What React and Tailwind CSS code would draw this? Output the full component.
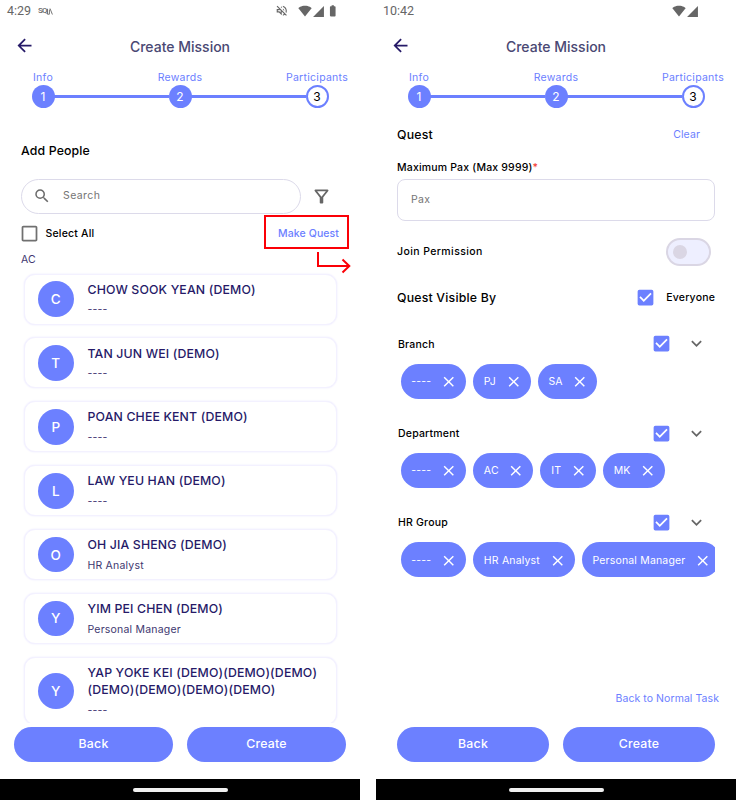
import React from "react";
import {
  MdArrowBack,
  MdBatteryFull,
  MdCheckBox,
  MdCheckBoxOutlineBlank,
  MdClose,
  MdKeyboardArrowDown,
  MdOutlineFilterAlt,
  MdOutlineVolumeOff,
  MdSearch,
  MdSignalCellular4Bar,
  MdSignalWifi4Bar,
} from "react-icons/md";

const people = [
  { initial: "C", name: "CHOW SOOK YEAN (DEMO)", role: "----" },
  { initial: "T", name: "TAN JUN WEI (DEMO)", role: "----" },
  { initial: "P", name: "POAN CHEE KENT (DEMO)", role: "----" },
  { initial: "L", name: "LAW YEU HAN (DEMO)", role: "----" },
  { initial: "O", name: "OH JIA SHENG (DEMO)", role: "HR Analyst" },
  { initial: "Y", name: "YIM PEI CHEN (DEMO)", role: "Personal Manager" },
  { initial: "Y", name: "YAP YOKE KEI (DEMO)(DEMO)(DEMO)\n(DEMO)(DEMO)(DEMO)(DEMO)", role: "----" },
];

const groups = [
  { title: "Branch", chips: ["----", "PJ", "SA"] },
  { title: "Department", chips: ["----", "AC", "IT", "MK"] },
  { title: "HR Group", chips: ["----", "HR Analyst", "Personal Manager"] },
];

function StatusBar({ time, full }) {
  return (
    <div className="flex h-[22px] shrink-0 items-center pl-[7px] text-[#666]">
      <span className="font-[Roboto] text-[12.5px] leading-[22px]">{time}</span>
      {full && (
        <span className="ml-[7px] flex h-[22px] items-center">
          <span className="font-[Roboto] text-[8px] font-medium leading-[22px] tracking-[-1px]">SQ</span>
          <svg className="ml-px" width="6" height="7" viewBox="0 0 6 7" fill="none" stroke="currentColor" strokeWidth="0.9">
            <path d="M0.5 0.8V6.2H2.4V1.5M3 0.5L5.4 6.5" />
          </svg>
        </span>
      )}
      <div className={full ? "ml-auto mr-[21px] flex items-center" : "ml-auto mr-[36px] flex items-center"}>
        {full && <MdOutlineVolumeOff className="mr-[9px] size-[13.5px]" />}
        <MdSignalWifi4Bar className="size-[14px]" />
        <MdSignalCellular4Bar className="mr-px size-[13px]" />
        {full && <MdBatteryFull className="size-[13.5px]" />}
      </div>
    </div>
  );
}

function Step({ label, number, current }) {
  return (
    <div className="flex w-[70px] flex-col items-center">
      <span className="h-[15px] text-[10.5px] leading-[16px] tracking-[0.28px] text-[#6c80ff]">{label}</span>
      <span
        className={
          current
            ? "flex size-[23px] items-center justify-center rounded-full border-2 border-[#6c80ff] bg-white pt-px text-[12px] text-black"
            : "flex size-[23px] items-center justify-center rounded-full bg-[#6c80ff] pt-px text-[12px] text-white"
        }
      >
        {number}
      </span>
    </div>
  );
}

function Header() {
  return (
    <>
      <div className="grid h-12 shrink-0 grid-cols-[60px_1fr_60px] items-center">
        <MdArrowBack className="mb-[2px] ml-[14px] size-[21px] text-[#261a68]" />
        <h1 className="pt-px text-center text-[14px] font-medium leading-5 text-[#4a4873]">Create Mission</h1>
      </div>
      <div className="-mt-[0.5px] flex h-[40.5px] shrink-0 pl-2">
        <Step label="Info" number="1" />
        <Line />
        <Step label="Rewards" number="2" />
        <Line />
        <Step label="Participants" number="3" current />
      </div>
    </>
  );
}

function Line() {
  return <div className="-mx-6 mt-[25px] h-[3px] w-[115px] shrink-0 bg-[#6c80ff]" />;
}

function Footer() {
  return (
    <div className="mt-auto flex h-[21px] shrink-0 items-center justify-center bg-black">
      <div className="h-[4px] w-[95px] rounded-full bg-[#f0f0f0]" />
    </div>
  );
}

function Button({ children }) {
  return (
    <button className="h-[35px] flex-1 rounded-full bg-[#6c80ff] text-[12.3px] font-medium tracking-[0.25px] text-white">
      {children}
    </button>
  );
}

function PersonCard({ initial, name, role }) {
  return (
    <div className="flex min-h-[51px] shrink-0 items-center rounded-[11px] border-[1.5px] border-[#f3f1ff] bg-white pb-[4.5px] pl-[13.5px] pt-[5.7px] shadow-[0_0_2px_#e9e6ff]">
      <div className="mb-px flex size-[35.5px] shrink-0 items-center justify-center rounded-full bg-[#6c80ff] text-[13.5px] font-medium text-white">
        {initial}
      </div>
      <div className="ml-[14px] text-[#261a68]">
        <div className="whitespace-pre-line text-[12.3px] font-medium leading-[17.8px] tracking-[0.15px]">{name}</div>
        <div className="mt-[4px] text-[10.5px] leading-[16px] tracking-[0.2px] text-[#40376f]">{role}</div>
      </div>
    </div>
  );
}

function ParticipantsScreen() {
  return (
    <section className="relative flex h-[800px] w-[360px] flex-col bg-white">
      <StatusBar time="4:29" full />
      <Header />
      <h2 className="mb-[18.5px] ml-[21px] mt-[30.5px] text-[12.3px] font-medium leading-5 tracking-[0.15px]">Add People</h2>
      <div className="flex shrink-0 items-center pl-[21px]">
        <div className="flex h-[34.5px] w-[279.5px] items-center rounded-full border border-[#dcdaea] pl-[11px]">
          <MdSearch className="size-[18px] text-[#6b6b6b]" />
          <span className="ml-3 text-[10.5px] tracking-[0.4px] text-[#757575]">Search</span>
        </div>
        <MdOutlineFilterAlt className="ml-[10px] size-[21px] text-[#666]" />
      </div>
      <div className="flex h-[39px] shrink-0 items-center pl-[19px] pr-[21px]">
        <MdCheckBoxOutlineBlank className="size-[21px] text-[#707070]" />
        <span className="ml-[5.5px] pt-px text-[10.5px] font-medium tracking-[0.2px]">Select All</span>
        <span className="ml-auto pt-px text-[10.5px] font-medium tracking-[0.1px] text-[#6c80ff]">Make Quest</span>
      </div>
      <div className="ml-[21px] h-[15px] shrink-0 text-[10.5px] leading-[14px] text-[#40376f]">AC</div>
      <div className="mx-[21px] flex h-[455px] shrink-0 flex-col gap-[12.9px] overflow-hidden px-[2.5px] pt-[6px]">
        {people.map((p) => (
          <PersonCard key={p.name} {...p} />
        ))}
      </div>
      <div className="mx-[14px] mt-[4px] flex gap-[14px]">
        <Button>Back</Button>
        <Button>Create</Button>
      </div>
      <Footer />
      <div className="absolute left-[264px] top-[215px] h-[34px] w-[85px] border-2 border-[#fb0007]" />
      <svg className="absolute left-[316px] top-[251px]" width="36" height="24" fill="none" stroke="#fb0007" strokeWidth="2">
        <path d="M2 1V15H33" />
        <path d="M26.500 8.500L33.300 15L26.500 21.500" />
      </svg>
    </section>
  );
}

function Chip({ label }) {
  return (
    <span className="flex h-[35px] shrink-0 items-center rounded-full bg-[#6c80ff] pl-[10.8px] pr-[8.5px] pt-px text-[10.5px] tracking-[0.18px] text-white">
      {label}
      <MdClose className="ml-[8.7px] size-[17.5px]" />
    </span>
  );
}

function QuestScreen() {
  return (
    <section className="flex h-[800px] w-[360px] flex-col bg-white">
      <StatusBar time="10:42" />
      <Header />
      <div className="ml-[21px] mr-[36px] mt-[14px] flex h-5 shrink-0 items-center justify-between pt-px">
        <h2 className="pt-px text-[12.3px] font-medium tracking-[0.2px]">Quest</h2>
        <span className="text-[10.5px] tracking-[0.1px] text-[#6c80ff]">Clear</span>
      </div>
      <label className="ml-[21px] mt-[16px] h-[15px] text-[10.5px] font-medium leading-[16px] tracking-[0.18px]">
        Maximum Pax (Max 9999)<span className="text-[#f44336]">*</span>
      </label>
      <div className="mx-[21px] mt-[4px] flex h-[41.5px] shrink-0 items-center rounded-[8px] border border-[#dcdaea] pl-[13px] text-[10.5px] tracking-[0.3px] text-[#757575]">
        Pax
      </div>
      <div className="ml-[21px] mr-[25px] mt-[17px] flex h-[28px] shrink-0 items-center justify-between">
        <span className="text-[10.5px] font-medium tracking-[0.4px]">Join Permission</span>
        <div className="flex h-[28px] w-[45px] items-center rounded-full border-2 border-[#dad6e4] bg-[#eeefff] pl-[5px]">
          <div className="size-[14px] rounded-full bg-[#dad6e4]" />
        </div>
      </div>
      <div className="mx-[21px] mt-[21px] flex h-[22px] shrink-0 items-center">
        <h2 className="pt-px text-[12.3px] font-medium tracking-[0.2px]">Quest Visible By</h2>
        <MdCheckBox className="ml-auto size-[21px] text-[#6c80ff]" />
        <span className="ml-[10.5px] text-[10.5px] font-medium tracking-[0.18px]">Everyone</span>
      </div>
      <div className="mt-[24.4px] flex flex-col gap-[23.3px]">
        {groups.map((g) => (
          <div key={g.title} className="ml-[22px] mr-[21px] flex flex-col overflow-hidden">
            <div className="flex h-[22px] items-center pr-[8px]">
              <span className="pt-px text-[10.5px] font-medium tracking-[0.2px]">{g.title}</span>
              <MdCheckBox className="ml-auto size-[21px] text-[#6c80ff]" />
              <MdKeyboardArrowDown className="ml-[14px] size-[21px] text-[#666]" />
            </div>
            <div className="ml-[2.5px] mt-[9px] flex gap-[7px]">
              {g.chips.map((c) => (
                <Chip key={c} label={c} />
              ))}
            </div>
          </div>
        ))}
      </div>
      <div className="mb-[20.5px] mr-[17px] mt-auto text-right text-[10.5px] leading-[15px] tracking-[0.07px] text-[#6c80ff]">
        Back to Normal Task
      </div>
      <div className="mx-[21px] mb-[17.5px] flex gap-[14px]">
        <Button>Back</Button>
        <Button>Create</Button>
      </div>
      <div className="flex flex-col">
        <Footer />
      </div>
    </section>
  );
}

export default function App() {
  return (
    <main className="flex h-[800px] w-[736px] gap-4 overflow-hidden bg-white font-[Inter,sans-serif] text-black">
      <ParticipantsScreen />
      <QuestScreen />
    </main>
  );
}
